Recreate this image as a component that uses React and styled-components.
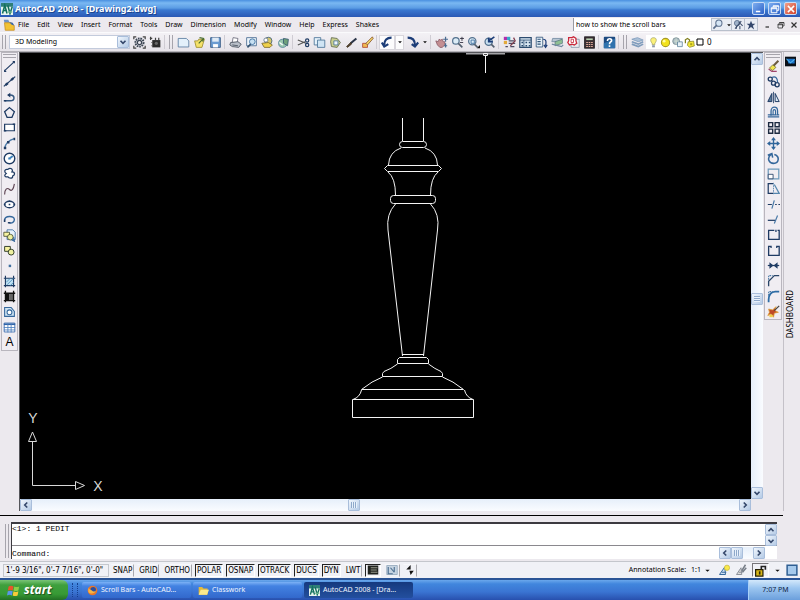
import React from 'react';
import styled, { createGlobalStyle, css } from 'styled-components';

/* ---------- icons, all on a 16 x 16 grid ---------- */

const NAVY = '#1f3b63';
const BLUE = '#4a7aa8';

const ICONS = {
  app: (
    <>
      <rect x="0" y="0" width="16" height="16" fill="#e8f4ee" />
      <path d="M0 0h16v5H0z" fill="#2f7f78" />
      <path d="M2 14L5 3l3 11M3 10h5M9 3l3 11 3-9" stroke="#12705e" strokeWidth="2" />
      <path d="M9 12h6" stroke="#6fb48f" strokeWidth="2" />
    </>
  ),
  drawing: (
    <>
      <path d="M1 1h6l2 4H2z" fill="#6d93c8" />
      <path d="M2 5h9l4 4v6H3z" fill="#f2c233" stroke="#c48a1c" />
      <path d="M8 4l5 1 2 4-4-2z" fill="#3f6aa8" />
    </>
  ),
  gear: (
    <>
      <path d="M1 4V1h3M12 1h3v3M15 12v3h-3M4 15H1v-3" stroke="#444" strokeWidth="1.500" />
      <circle cx="8" cy="8" r="5" stroke="#3c4654" strokeWidth="2.400" strokeDasharray="2 1" />
      <circle cx="8" cy="8" r="2.600" stroke="#3c4654" strokeWidth="1.500" />
    </>
  ),
  home: (
    <>
      <rect x="4" y="5" width="10" height="9" fill="#2b2b2b" />
      <path d="M1 3h3M2 1v4M3 8h1M3 12h1M8 2v3M12 2v3" stroke="#444" strokeWidth="1.500" />
      <circle cx="9" cy="9" r="2" fill="#666" />
    </>
  ),
  page: <path d="M1.500 3h10l3 3v7.500h-13z" fill="#e3f0fb" stroke="#55789c" />,
  open: (
    <>
      <path d="M2 6h4l1-2h7l-3 10H4z" fill="#f5e26a" stroke="#9a8a2c" />
      <path d="M8 2l5 1-1 4M13 3L7 9" stroke="#4c6f30" strokeWidth="1.500" />
    </>
  ),
  save: (
    <>
      <path d="M2 2h12v12H2z" fill="#6b9cd2" stroke="#31557f" />
      <path d="M4 2h8v5H4z" fill="#dfeaf5" />
      <path d="M5 10h6v4H5z" fill="#fff" />
    </>
  ),
  print: (
    <>
      <path d="M5 2l6 1-1 5H4z" fill="#fff" stroke="#667" />
      <path d="M2 8l9-1 4 3-3 4-8-1-3-2z" fill="#b8bec8" stroke="#454d5a" />
      <path d="M4 11l7 1" stroke="#454d5a" />
    </>
  ),
  preview: (
    <>
      <path d="M2 2h12v10H2z" fill="#eef5fb" stroke="#44678f" />
      <circle cx="9" cy="7" r="3.500" fill="#c7e0f2" stroke="#33679b" />
      <path d="M7 10l-4 4" stroke="#33506f" strokeWidth="2" />
    </>
  ),
  publish: (
    <>
      <circle cx="9" cy="6" r="4.500" fill="#d7c86a" stroke="#3a5c7c" />
      <path d="M1 9l8-1 5 3-3 3H4z" fill="#efd14b" stroke="#77662c" />
      <circle cx="6" cy="5" r="2.500" fill="#fff" stroke="#66788d" />
    </>
  ),
  globe: (
    <>
      <circle cx="7" cy="9" r="5" fill="#9cc9b0" stroke="#4f7f96" />
      <path d="M8 3l6 1-1 8-5-3z" fill="#6fa07b" stroke="#33566f" />
      <path d="M3 8l4 3" stroke="#fff" strokeWidth="1.500" />
    </>
  ),
  cut: (
    <>
      <path d="M1 5l10 4M1 11l9-4" stroke="#555" strokeWidth="1.300" />
      <circle cx="12.500" cy="5.500" r="2" stroke={NAVY} strokeWidth="1.500" />
      <circle cx="12.500" cy="11" r="2" stroke={NAVY} strokeWidth="1.500" />
    </>
  ),
  copy: (
    <>
      <path d="M1.500 2h8v9h-8z" fill="#e6f2fb" stroke="#456f94" />
      <path d="M5.500 5h9v9h-9z" fill="#cfe4f4" stroke="#456f94" />
    </>
  ),
  paste: (
    <>
      <path d="M3 2l7 1 4 5-4 6-7-1-1-6z" fill="#c9cf8e" stroke="#5c6546" />
      <path d="M6 6h5v5H6z" fill="#eef6fc" stroke="#456f94" />
    </>
  ),
  brush: (
    <>
      <path d="M14 3L7 9" stroke="#2a3448" strokeWidth="2.500" />
      <path d="M7 8l1 2-5 4-1-1z" fill="#5a4630" stroke="#3a2d1e" />
    </>
  ),
  block: (
    <>
      <path d="M2 9h6v5H2z" fill="#f0bb52" stroke="#ad4430" />
      <path d="M14 1l1 2-7 8-2-2z" fill="#f3d96a" stroke="#85512d" />
    </>
  ),
  undo: <path d="M13 2C7 2 4 5 4 11M1 8l3 5 5-3" stroke="#1c3d78" strokeWidth="2.600" />,
  redo: <path d="M2 2c6 0 9 3 9 9M7 10l4 3 4-5" stroke="#1c3d78" strokeWidth="2.600" />,
  down: <path d="M3 6h10l-5 5z" fill="#111" />,
  hand: (
    <>
      <path d="M1 6l3 1 1-3 2 1 2-1 1 3 2 0v4l-3 3H6L3 11z" fill="#c48e92" stroke="#8b5b67" />
      <path d="M13 1v6M10 4h6M13 9v5M11 12h4" stroke="#4a6b90" strokeWidth="1.500" />
    </>
  ),
  zoomRt: (
    <>
      <circle cx="6" cy="6" r="4" fill="#dcecf6" stroke="#54728f" strokeWidth="1.500" />
      <path d="M9 9l5 5" stroke="#54606f" strokeWidth="2" />
      <path d="M11 3h5M13.500 1v5M11 8h4" stroke="#223" />
    </>
  ),
  zoomWin: (
    <>
      <circle cx="6.500" cy="6.500" r="4.500" fill="#dcecf6" stroke="#54728f" strokeWidth="1.500" />
      <path d="M5 5h4v4H5z" stroke="#34679b" />
      <path d="M9 10l4 4" stroke="#54606f" strokeWidth="2" />
      <path d="M12 15h4v-4z" fill="#111" />
    </>
  ),
  zoomPrev: (
    <>
      <circle cx="7" cy="7" r="4.500" fill="#c8dff0" stroke="#54728f" strokeWidth="1.500" />
      <path d="M14 1L7 6M7 2v5h5" stroke="#1c3d78" strokeWidth="2" />
      <path d="M10 10l4 4" stroke="#54606f" strokeWidth="2" />
    </>
  ),
  props: (
    <>
      <path d="M1 1h4v4H1z" fill="#b02fae" />
      <path d="M5 1h4v4H5z" fill="#35a7c9" />
      <path d="M1 6h4v4H1z" fill="#e2a93b" />
      <path d="M7 6h7M7 9h8M3 13h3M9 13h5" stroke="#4d4b63" strokeWidth="1.500" />
      <path d="M13 2l2 4-6 6" stroke="#7c3b4c" strokeWidth="1.500" />
    </>
  ),
  center: (
    <>
      <rect x="1" y="2" width="14" height="12" fill="#dbe9f4" stroke="#2a4a6e" strokeWidth="1.500" />
      <path d="M1 5h14M6 5v9" stroke="#2a4a6e" />
      <path d="M8 7h2v2H8zM12 7h2v2h-2zM8 11h2v2H8zM12 11h2v2h-2zM3 7h2v2H3zM3 11h2v2H3z" fill="#2a4a6e" />
    </>
  ),
  palette: (
    <>
      <path d="M1.500 1.500h8v12h-8z" fill="#e6f0f8" stroke="#2f5277" />
      <path d="M3 4h4M3 7h4M3 10h4" stroke="#2f5277" strokeWidth="1.500" />
      <path d="M10 4c4 0 4 3 3 8M11 11l2 3 2-3" stroke="#1c3d78" strokeWidth="1.500" />
    </>
  ),
  sheets: (
    <>
      <path d="M2 3h12l-4 4H1z" fill="#b7c5d2" stroke="#7089a0" />
      <path d="M5 7l9-3v5l-9 3z" fill="#8fc093" stroke="#5e7d83" />
      <path d="M1 10l12 3 2-2" stroke="#7089a0" strokeWidth="1.500" />
    </>
  ),
  markup: (
    <>
      <path d="M5 4h10v10H5z" fill="#e8edf2" stroke="#8a98a8" />
      <path d="M2 2h4l2-1 3 2v3l1 3-3 2-3-1-3 1-2-3 1-2z" fill="#fff" stroke="#c9283b" strokeWidth="1.600" />
      <path d="M5 4h3v4H5z" stroke="#c9283b" />
    </>
  ),
  calc: (
    <>
      <rect x="2" y="1" width="12" height="14" fill="#3b3034" stroke="#1e1a1e" />
      <path d="M4 3h8v2H4z" fill="#b8d0b0" />
      <path d="M4 8h8M4 10.500h8M4 13h8" stroke="#e8b0a0" strokeWidth="1.300" strokeDasharray="2 1" />
    </>
  ),
  help: (
    <>
      <rect x="1" y="1" width="14" height="14" rx="1" fill="#1d4a80" />
      <path d="M1 9l14-6v12H1z" fill="#2f72ad" />
      <path d="M5.500 6c0-4 6-3 5 0-.5 1.500-2.500 1.500-2.500 4M8 11.500v2" stroke="#fff" strokeWidth="2" />
    </>
  ),
  layers: (
    <>
      <path d="M1 4l7-2 7 3-6 2z" fill="#a9bfd6" stroke="#7f9cbc" />
      <path d="M1 7l8 3 6-3M1 10l8 3 6-3" stroke="#7f9cbc" strokeWidth="2" />
    </>
  ),
  bulb: (
    <>
      <path d="M8 1c5 0 5 5 2 8v2H6V9C3 6 3 1 8 1z" fill="#fbf17a" stroke="#9b9b60" />
      <path d="M6 12h4v3H6z" fill="#8d98aa" />
    </>
  ),
  sun: (
    <>
      <circle cx="8" cy="8" r="6" fill="#f2e21d" stroke="#a89a27" strokeWidth="1.500" />
      <circle cx="6" cy="6" r="2" fill="#fffba5" />
    </>
  ),
  freeze: (
    <>
      <circle cx="6" cy="6" r="5" fill="#aebfc5" stroke="#6b8087" />
      <path d="M8 7h7v7H8z" fill="#e8f2f8" stroke="#4b7390" />
      <path d="M6 2v9M3 6h7" stroke="#d9e6d6" />
    </>
  ),
  lockOpen: (
    <>
      <path d="M2 9V4l3-2 3 2v3" stroke="#7f7e1d" strokeWidth="1.800" />
      <path d="M6 7l8-1 1 7-7 2-3-3z" fill="#f4e838" stroke="#7f7e1d" />
      <path d="M9 9h3v3H9z" fill="#a9a31e" />
    </>
  ),
  square: <path d="M2 2h12v12H2z" fill="#fff" stroke="#000" strokeWidth="2" />,
  magnifier: (
    <>
      <circle cx="10" cy="6" r="4.500" fill="#d6e6f5" stroke="#5b6f8c" strokeWidth="1.500" />
      <path d="M7 9l-5 5" stroke="#5b6f8c" strokeWidth="2.500" />
    </>
  ),
  comm: (
    <>
      <circle cx="6" cy="6" r="4" fill="#9fb2c9" stroke="#475c7b" />
      <path d="M3 14l9-11M8 4l6 6M10 10v5M5 10v4" stroke="#3a4c6a" strokeWidth="1.500" />
    </>
  ),
  star: <path d="M8 1l2 5h5l-4 3 2 6-5-4-5 4 2-6-4-3h5z" fill="#34486c" />,

  line: <path d="M2 13L13 3M2 12v2h2M12 2h2v2" stroke={NAVY} strokeWidth="1.400" />,
  xline: (
    <>
      <path d="M1 14L15 2" stroke={NAVY} strokeWidth="1.600" />
      <path d="M3 12.500l3-2.600M10 6.300l3-2.600" stroke={NAVY} strokeWidth="2.800" />
    </>
  ),
  pline: (
    <>
      <path d="M2 12h7c6 0 6-7 0-7H7" stroke="#34577f" strokeWidth="1.800" />
      <path d="M1 11h3v2H1zM9 2v6L5 5z" fill={NAVY} />
    </>
  ),
  polygon: <path d="M8 2l6 5-3 7H5L2 7z" stroke={NAVY} strokeWidth="1.600" />,
  rectangle: (
    <>
      <path d="M2 4h12v8H2z" fill="#fff" stroke={NAVY} strokeWidth="1.500" />
      <path d="M1 11h3v2H1zM12 3h3v2h-3z" fill={NAVY} />
    </>
  ),
  arc: (
    <>
      <path d="M2 14C3 8 7 4 14 2" stroke={BLUE} strokeWidth="1.600" />
      <path d="M1 12h3v3H1zM5 5h3v3H5zM13 1h2v3h-2z" fill={NAVY} />
    </>
  ),
  circle: (
    <>
      <circle cx="8" cy="8" r="6.500" fill="#fff" stroke={NAVY} strokeWidth="1.700" />
      <path d="M8 8l4-3M6.500 8h3" stroke="#3e83bd" strokeWidth="2.400" />
    </>
  ),
  cloud: (
    <path
      d="M4 8c-3-2-2-6 2-5 3-3 7 0 5 3 4 0 4 4 1 5 0 4-5 3-6 1-4 1-5-2-2-4z"
      fill="#fff"
      stroke={NAVY}
      strokeWidth="1.500"
    />
  ),
  spline: <path d="M2 14c0-6 3-9 6-6s5-1 6-7" stroke="#5d4452" strokeWidth="1.400" />,
  ellipse: (
    <>
      <ellipse cx="8" cy="8" rx="6" ry="4" fill="#fff" stroke={NAVY} strokeWidth="1.700" />
      <path d="M1 7h2v2H1zM13 7h2v2h-2zM7 3h2v2H7zM7 7h2v2H7z" fill={NAVY} />
    </>
  ),
  ellipseArc: (
    <>
      <path d="M2 9c0-6 12-6 12-1 0 3-3 5-6 4" stroke="#34679b" strokeWidth="1.700" />
      <path d="M1 8h2v3H1zM6 11h3v2H6z" fill={NAVY} />
    </>
  ),
  insert: (
    <>
      <path d="M5 1h7l3 3v9H5z" fill="#e6f2fb" stroke="#35679b" />
      <path d="M1 4h7v5H1z" fill="#f7f3a0" stroke="#454b2c" />
      <circle cx="9" cy="10" r="3.500" fill="#eef1a0" stroke="#454b2c" />
      <path d="M10 13l4 2-1-5" stroke="#35679b" strokeWidth="1.500" />
    </>
  ),
  makeBlock: (
    <>
      <path d="M2 3h7v6H2z" fill="#f7f3a0" stroke="#33402c" strokeWidth="1.200" />
      <circle cx="10" cy="10" r="3.600" fill="#eef1a0" stroke="#33402c" strokeWidth="1.200" />
    </>
  ),
  point: <path d="M7 7h3v3H7z" fill="#3f6f9f" />,
  hatch: (
    <>
      <path d="M3 4h10v9H3z" fill="#bfe0f2" />
      <path d="M1 4h14M1 13h14M3 1v14M13 1v14" stroke={NAVY} strokeWidth="1.400" />
      <path d="M4 9l5-5M5 12l8-8M9 13l4-4" stroke="#4689b8" />
    </>
  ),
  gradient: (
    <>
      <path d="M3 4h5v9H3z" fill="#111" />
      <path d="M8 4h5v9H8z" fill="#666" />
      <path d="M1 4h14M1 13h14M3 1v14M13 1v14" stroke="#111" strokeWidth="1.600" />
    </>
  ),
  region: (
    <>
      <path d="M2 3h8l4 5v6H2z" fill="#cfe4f4" stroke="#35679b" strokeWidth="1.300" />
      <circle cx="8" cy="9" r="3" fill="#fff" stroke="#35679b" strokeWidth="1.300" />
    </>
  ),
  table: (
    <>
      <path d="M1.500 2.500h13v11h-13z" fill="#fff" stroke="#2f63a8" />
      <path d="M1 3h14v2H1z" fill="#2f63a8" />
      <path d="M1 8h14M1 11h14M6 3v11M10 3v11" stroke="#4a7cbc" />
    </>
  ),

  erase: (
    <>
      <path d="M14 1L8 7" stroke="#6a5a3e" strokeWidth="2.500" />
      <path d="M3 10l4-4 4 3-4 4z" fill="#efe34e" stroke="#77722a" />
      <path d="M2 11l4 3h6" stroke="#a1446b" strokeWidth="1.500" />
    </>
  ),
  copyObj: (
    <>
      <circle cx="4" cy="5" r="2.500" stroke={NAVY} strokeWidth="1.600" />
      <circle cx="8" cy="10" r="2.500" stroke={NAVY} strokeWidth="1.600" />
      <circle cx="12.500" cy="12" r="2.500" stroke={NAVY} strokeWidth="1.600" />
      <path d="M6 3c4-2 7 0 7 6" stroke="#34679b" strokeWidth="1.500" />
    </>
  ),
  mirror: (
    <>
      <path d="M6 3v10H1z" fill="#5c7c9c" stroke={NAVY} strokeWidth="1.200" />
      <path d="M10 3v10h5z" fill="#dbe9f4" stroke={NAVY} strokeWidth="1.200" />
      <path d="M8 1v14" stroke={NAVY} />
    </>
  ),
  offset: (
    <>
      <path d="M1 13.500h14M1 11h4V6c0-6 8-6 8 0v5h2" stroke="#34679b" strokeWidth="1.600" />
      <path d="M4 11h8M7.500 11V6c0-2 3-2 3 0v5" stroke="#34679b" strokeWidth="1.400" />
    </>
  ),
  array: <path d="M2 2h5v5H2zM10 2h5v5h-5zM2 10h5v5H2zM10 10h5v5h-5z" stroke="#1c2a40" strokeWidth="1.700" />,
  move: (
    <>
      <path d="M8 2v12M2 8h12" stroke="#2f659a" strokeWidth="1.700" />
      <path d="M8 0l3 4H5zM8 16l3-4H5zM0 8l4-3v6zM16 8l-4-3v6z" fill="#2f659a" />
    </>
  ),
  rotate: <path d="M5 3C-1 8 3 14 8 14c7 0 8-9 1-11M1 4l5-2 1 5" stroke="#34679b" strokeWidth="1.900" />,
  scale: (
    <>
      <path d="M1.500 2.500h13v12h-13z" stroke="#6d9abb" strokeWidth="1.500" />
      <path d="M1.500 9h6v5.500h-6z" fill="#fff" stroke={NAVY} />
    </>
  ),
  stretch: (
    <>
      <path d="M7.500 2h-6v12h6" stroke={NAVY} strokeWidth="1.500" />
      <path d="M8 1v14" stroke={BLUE} strokeDasharray="2 1" />
      <path d="M9 3l6 11H8" stroke="#5687ae" strokeWidth="1.500" />
    </>
  ),
  trim: (
    <>
      <path d="M1 8h5M10 8h2M14 8h2" stroke={NAVY} strokeWidth="1.500" />
      <path d="M9 3L6 13" stroke={BLUE} strokeWidth="1.500" />
    </>
  ),
  extend: (
    <>
      <path d="M1 9h9" stroke={NAVY} strokeWidth="1.500" />
      <path d="M13 3l-4 10" stroke={BLUE} strokeWidth="1.500" />
    </>
  ),
  breakPt: <path d="M9 3H2v11h13V3h-2M11 2v3" stroke={NAVY} strokeWidth="1.600" />,
  breakObj: <path d="M5 3H2v11h13V3h-3M5 2v3M12 2v3" stroke={NAVY} strokeWidth="1.600" />,
  join: (
    <>
      <path d="M1 8h14" stroke={NAVY} strokeWidth="1.500" />
      <path d="M3 4l5 4-5 4zM13 4L8 8l5 4z" fill={NAVY} />
    </>
  ),
  chamfer: (
    <>
      <path d="M2 15V9l7-7h6" stroke="#2a4668" strokeWidth="1.600" />
      <path d="M2 7V2h5" stroke={BLUE} strokeWidth="1.300" strokeDasharray="2 1" />
    </>
  ),
  fillet: (
    <>
      <path d="M2 15v-3c0-6 3-10 8-10h5" stroke="#2d6ca5" strokeWidth="2.200" />
      <path d="M2 7V2h5" stroke={BLUE} strokeWidth="1.300" strokeDasharray="2 1" />
    </>
  ),
  explode: (
    <>
      <path d="M2 5l5 1 4-4-1 5 4 2-5 1-1 5-3-4-4 2 2-4z" fill="#bf4a28" stroke="#e0a13a" />
      <path d="M9 7l6-6" stroke="#444" strokeWidth="1.500" />
      <path d="M3 12h4v3H3z" fill="#efd14b" />
    </>
  ),
  dash: (
    <>
      <rect x="0" y="1" width="16" height="14" fill="#0b0f16" />
      <path d="M3 4h11v7H5z" fill="#1c73c8" />
      <path d="M2 4l6 6 6-5" stroke="#54b4ee" strokeWidth="1.500" />
    </>
  ),
  chevUp: <path d="M4 10l4-4 4 4" stroke="#34476a" strokeWidth="2.600" />,
  chevDown: <path d="M4 6l4 4 4-4" stroke="#34476a" strokeWidth="2.600" />,
  chevLeft: <path d="M10 4L6 8l4 4" stroke="#34476a" strokeWidth="2.600" />,
  chevRight: <path d="M6 4l4 4-4 4" stroke="#34476a" strokeWidth="2.600" />,
  minimize: <path d="M3 12h7" stroke="currentColor" strokeWidth="2.500" />,
  restore: <path d="M5 5V3h9v7h-3M2 6h9v8H2zM2 7.500h9M5 3.500h9" stroke="currentColor" strokeWidth="1.600" />,
  close: <path d="M3 3l10 10M13 3L3 13" stroke="currentColor" strokeWidth="2.400" />,
  model: (
    <>
      <rect x="1" y="2" width="14" height="12" fill="#20231f" />
      <path d="M5 5h9M5 8h8M5 11h9" stroke="#96998c" strokeWidth="1.500" />
    </>
  ),
  layout: (
    <>
      <path d="M1 2h14v12H1z" fill="#c6d4e1" stroke="#8da3b8" />
      <path d="M3 4v9h6M6 5l5 6M11 4v7" stroke="#4d6f91" strokeWidth="1.500" />
    </>
  ),
  updown: <path d="M9 0v7H2zM7 9h7l-5 7z" fill="#111" />,
  annoVis: (
    <>
      <path d="M2 14L9 4l1 10zM5 11h6" fill="#cfe0f4" stroke="#34679b" strokeWidth="1.300" />
      <circle cx="12" cy="5" r="3.500" fill="#f9e94b" stroke="#c9b93c" />
    </>
  ),
  annoAuto: (
    <>
      <path d="M2 14L8 5l1 9zM5 11h5" fill="#ddd" stroke="#8a8f98" strokeWidth="1.300" />
      <path d="M14 1L9 9M15 5l-5 6" stroke="#777e88" strokeWidth="2" />
    </>
  ),
  padlock: (
    <>
      <path d="M9 7V3h5v4" stroke="#222" strokeWidth="2" />
      <path d="M2 7h9v8H2z" fill="#d8b718" stroke="#252005" strokeWidth="1.500" />
      <path d="M6 9h2v4H6z" fill="#302804" />
    </>
  ),
  clean: <path d="M1.500 1.500h13v13h-13z" fill="#a6caec" stroke="#2f5f92" strokeWidth="2" />,
  windows: (
    <>
      <path d="M2 3c2-1 4-1 6 0L7 8C5 7 3 7 1 8z" fill="#e8552b" />
      <path d="M9 3c2 1 4 1 6 0l-1 5c-2 1-4 1-6 0z" fill="#8ccf46" />
      <path d="M1 9c2-1 4-1 6 0l-1 5c-2-1-4-1-6 0z" fill="#5a95ec" />
      <path d="M8 9c2 1 4 1 6 0l-1 5c-2 1-4 1-6 0z" fill="#f8cb39" />
    </>
  ),
  firefox: (
    <>
      <circle cx="8" cy="8" r="7" fill="#e8762a" />
      <circle cx="9" cy="7" r="4" fill="#2a4fa0" />
      <path d="M2 3c0 4 3 3 5 5s4 2 6 0c-1 5-8 6-11 2z" fill="#f7b545" />
    </>
  ),
  folder: (
    <>
      <path d="M1 3h5l2 2h6v9H1z" fill="#e2b93c" />
      <path d="M4 7h12l-3 7H1z" fill="#fbe98c" />
    </>
  ),
};

const Icon = ({ name, size = 13 }) => (
  <Glyph viewBox="0 0 16 16" width={size} height={size} fill="none" aria-hidden="true">
    {ICONS[name]}
  </Glyph>
);

/* ---------- data ---------- */

const MENUS = ['File', 'Edit', 'View', 'Insert', 'Format', 'Tools', 'Draw', 'Dimension', 'Modify', 'Window', 'Help', 'Express', 'Shakes'];

const STANDARD = [
  ['page', 'open', 'save'],
  ['print', 'preview', 'publish', 'globe'],
  ['cut', 'copy', 'paste', 'brush', 'block'],
];

const VIEW_TOOLS = [
  ['hand', 'zoomRt', 'zoomWin', 'zoomPrev'],
  ['props', 'center', 'palette', 'sheets', 'markup', 'calc'],
  ['help'],
];

const DRAW_TOOLS = ['line', 'xline', 'pline', 'polygon', 'rectangle', 'arc', 'circle', 'cloud', 'spline', 'ellipse', 'ellipseArc', 'insert', 'makeBlock', 'point', 'hatch', 'gradient', 'region', 'table', 'text'];

const MODIFY_TOOLS = ['erase', 'copyObj', 'mirror', 'offset', 'array', 'move', 'rotate', 'scale', 'stretch', 'trim', 'extend', 'breakPt', 'breakObj', 'join', 'chamfer', 'fillet', 'explode'];

const MODES = [
  { label: 'SNAP', on: false },
  { label: 'GRID', on: false },
  { label: 'ORTHO', on: false },
  { label: 'POLAR', on: true },
  { label: 'OSNAP', on: true },
  { label: 'OTRACK', on: true },
  { label: 'DUCS', on: true },
  { label: 'DYN', on: true },
  { label: 'LWT', on: false },
];

const TASKS = [
  { icon: 'firefox', label: 'Scroll Bars - AutoCAD...' },
  { icon: 'folder', label: 'Classwork' },
  { icon: 'app', label: 'AutoCAD 2008 - [Dra...', active: true },
];

/* ---------- parts ---------- */

const ToolGroups = ({ groups }) =>
  groups.map((group) => (
    <React.Fragment key={group[0]}>
      {group.map((name) => (
        <ToolButton key={name} type="button" aria-label={name}>
          <Icon name={name} />
        </ToolButton>
      ))}
      <Separator />
    </React.Fragment>
  ));

const SideTools = ({ tools, side }) => (
  <ToolColumn $side={side}>
    <ColumnGrip />
    <ToolStack $count={tools.length}>
      {tools.map((name) => (
        <StackButton key={name} type="button" aria-label={name}>
          {name === 'text' ? 'A' : <Icon name={name} />}
        </StackButton>
      ))}
    </ToolStack>
  </ToolColumn>
);

const ScrollBar = ({ vertical, before, after }) => (
  <Track $vertical={vertical}>
    <ScrollButton type="button" aria-label="Scroll back">
      <Icon name={vertical ? 'chevUp' : 'chevLeft'} size={10} />
    </ScrollButton>
    <Space $grow={before} />
    <ScrollThumb $vertical={vertical} />
    <Space $grow={after} />
    <ScrollButton type="button" aria-label="Scroll forward">
      <Icon name={vertical ? 'chevDown' : 'chevRight'} size={10} />
    </ScrollButton>
  </Track>
);

const Drawing = () => (
  <DrawingSvg viewBox="20 53 731 446" preserveAspectRatio="xMidYMid meet" fill="none" stroke="#f4f4f4">
    {/* cursor at the top edge */}
    <path d="M466 53.500h39" stroke="#a4a4a8" strokeWidth="2" />
    <path d="M485.500 56v17M483.500 53.500h4v2h-4z" />

    {/* table leg */}
    <path d="M402.500 118v23M423.500 118v23" />
    <rect x="399.500" y="141.500" width="27" height="6" rx="3" />
    <path d="M401 148Q389 152 388.500 165M425 148Q437 152 437.500 165" />
    <path d="M387.500 165.500h51l3 3-3 3h-51l-3-3z" />
    <path d="M388 172Q395.500 178 395.500 195M438 172Q430.500 178 430.500 195" />
    <rect x="390.500" y="195.500" width="45" height="8" rx="3" />
    <path d="M395.500 204Q386 214 388 230L402.500 356M430.500 204Q440 214 437.500 230L423.500 356" />
    <path d="M402 354.500h22M399.500 357.500h27l2 2v4h-31v-4zM397.500 364Q391 369 384 371.500l-1.500 2v3h60v-3l-1.500-2Q435 369 428.500 364" />
    <path d="M382.500 377Q372 381 361.500 389.500h102Q453 381 442.500 377" />
    <path d="M361.500 390Q360 397 353 399.500M464.500 390Q466 397 473 399.500" />
    <path d="M352.500 399.500h121v18h-121z" />

    {/* UCS icon */}
    <path d="M32.500 441V485.500H75M28.500 441.500l4-9.500 4 9.500zM75.500 481.500v8l9-4z" stroke="#d8d8d8" />
    <AxisLabel x="33" y="423">Y</AxisLabel>
    <AxisLabel x="98" y="491">X</AxisLabel>
  </DrawingSvg>
);

export default function App() {
  return (
    <Window>
      <GlobalStyle />

      <TitleBar>
        <Icon name="app" size={12} />
        <Title>AutoCAD 2008 - [Drawing2.dwg]</Title>
        <CaptionButton type="button" aria-label="Minimize"><Icon name="minimize" size={10} /></CaptionButton>
        <CaptionButton type="button" aria-label="Restore"><Icon name="restore" size={10} /></CaptionButton>
        <CaptionButton type="button" aria-label="Close" $danger><Icon name="close" size={10} /></CaptionButton>
      </TitleBar>

      <MenuBar>
        <Icon name="drawing" size={12} />
        <MenuList>
          {MENUS.map((label) => <MenuItem key={label} type="button">{label}</MenuItem>)}
        </MenuList>
        <SearchInput aria-label="Search help" defaultValue="how to show the scroll bars" />
        <InfoButton type="button" aria-label="Search" $wide>
          <Icon name="magnifier" size={11} />
          <Icon name="down" size={6} />
        </InfoButton>
        <InfoButton type="button" aria-label="Communication center"><Icon name="comm" size={11} /></InfoButton>
        <InfoButton type="button" aria-label="Favorites"><Icon name="star" size={10} /></InfoButton>
        <DocButtons>
          <PlainButton type="button" aria-label="Minimize drawing"><Icon name="minimize" size={8} /></PlainButton>
          <PlainButton type="button" aria-label="Restore drawing"><Icon name="restore" size={8} /></PlainButton>
          <PlainButton type="button" aria-label="Close drawing"><Icon name="close" size={8} /></PlainButton>
        </DocButtons>
      </MenuBar>

      <ToolBar>
        <Grip />
        <WorkspaceBox>
          <WorkspaceSelect aria-label="Workspace" defaultValue="3D Modeling">
            <option>3D Modeling</option>
          </WorkspaceSelect>
          <SelectArrow><Icon name="chevDown" size={10} /></SelectArrow>
        </WorkspaceBox>
        <ToolButton type="button" aria-label="Workspace settings"><Icon name="gear" /></ToolButton>
        <ToolButton type="button" aria-label="My workspace"><Icon name="home" /></ToolButton>
        <Separator />
        <Grip />
        <ToolGroups groups={STANDARD} />
        <ToolButton type="button" aria-label="Undo" $raised><Icon name="undo" /></ToolButton>
        <ArrowButton type="button" aria-label="Undo list" $raised><Icon name="down" size={6} /></ArrowButton>
        <ToolButton type="button" aria-label="Redo"><Icon name="redo" /></ToolButton>
        <ArrowButton type="button" aria-label="Redo list"><Icon name="down" size={6} /></ArrowButton>
        <Separator />
        <ToolGroups groups={VIEW_TOOLS} />
        <Grip />
        <ToolButton type="button" aria-label="Layers"><Icon name="layers" /></ToolButton>
        <LayerBox>
          <Icon name="bulb" size={11} />
          <Icon name="sun" size={11} />
          <Icon name="freeze" size={11} />
          <Icon name="lockOpen" size={11} />
          <Icon name="square" size={8} />
          <LayerName>0</LayerName>
        </LayerBox>
      </ToolBar>

      <Workspace>
        <SideTools tools={DRAW_TOOLS} side="left" />
        <ViewArea>
          <Canvas><Drawing /></Canvas>
          <ScrollBar vertical before={555} after={445} />
          <ScrollBar before={455} after={545} />
        </ViewArea>
        <SideTools tools={MODIFY_TOOLS} side="right" />
        <Dashboard>
          <Icon name="dash" size={11} />
          <DashboardLabel>DASHBOARD</DashboardLabel>
        </Dashboard>
      </Workspace>

      <CommandPanel>
        <Grip />
        <CommandWindow>
          <History>
            <HistoryText>&lt;1&gt;: 1 PEDIT</HistoryText>
            <HistoryScroll>
              <ScrollButton type="button" aria-label="Scroll up"><Icon name="chevUp" size={10} /></ScrollButton>
              <ScrollButton type="button" aria-label="Scroll down"><Icon name="chevDown" size={10} /></ScrollButton>
            </HistoryScroll>
          </History>
          <PromptRow>
            <PromptLabel htmlFor="command">Command:</PromptLabel>
            <PromptInput id="command" />
            <PromptScroll><ScrollBar before={0} after={1} /></PromptScroll>
          </PromptRow>
        </CommandWindow>
      </CommandPanel>

      <StatusBar>
        <Coordinates>1'-9 3/16", 0'-7 7/16", 0'-0"</Coordinates>
        <ModeList>
          {MODES.map(({ label, on }) => (
            <ModeButton key={label} type="button" aria-pressed={on} $on={on}>{label}</ModeButton>
          ))}
          <ModeButton type="button" aria-label="Model" $on><Icon name="model" size={12} /></ModeButton>
          <ModeButton type="button" aria-label="Layout"><Icon name="layout" size={12} /></ModeButton>
          <ModeButton type="button" aria-label="More layouts"><Icon name="updown" size={10} /></ModeButton>
        </ModeList>
        <StatusTray>
          <span>Annotation Scale:</span>
          <ScaleButton type="button">1:1 <Icon name="down" size={7} /></ScaleButton>
          <PlainButton type="button" aria-label="Annotation visibility"><Icon name="annoVis" size={12} /></PlainButton>
          <PlainButton type="button" aria-label="Automatic scales"><Icon name="annoAuto" size={12} /></PlainButton>
          <LockButton type="button" aria-label="Lock toolbars"><Icon name="padlock" /></LockButton>
          <PlainButton type="button" aria-label="Status bar menu"><Icon name="down" size={7} /></PlainButton>
          <PlainButton type="button" aria-label="Clean screen"><Icon name="clean" size={12} /></PlainButton>
        </StatusTray>
      </StatusBar>

      <TaskBar>
        <StartButton type="button"><Icon name="windows" size={13} />start</StartButton>
        <TaskGrip />
        <TaskList>
          {TASKS.map(({ icon, label, active }) => (
            <TaskButton key={label} type="button" $active={active}>
              <Icon name={icon} size={11} />
              {label}
            </TaskButton>
          ))}
        </TaskList>
        <Clock>7:07 PM</Clock>
      </TaskBar>
    </Window>
  );
}

/* ---------- styles ---------- */

const UI_FONT = '"Noto Sans", "Open Sans", sans-serif';
const CONDENSED = '"DejaVu Sans Condensed", "Noto Sans", sans-serif';
const ARIAL = '"Liberation Sans", Arial, sans-serif';

const GlobalStyle = createGlobalStyle`
  * {
    box-sizing: border-box;
  }
  body {
    margin: 0;
    background: #ece9ee;
    color: #000;
    font: 7px/10px ${UI_FONT};
  }
  button, input, select {
    margin: 0;
    padding: 0;
    border: 0;
    background: none;
    color: inherit;
    font: inherit;
  }
`;

const Glyph = styled.svg`
  display: block;
  flex: none;
`;

const Window = styled.div`
  display: flex;
  flex-direction: column;
  min-height: 100vh;
  overflow: hidden;
`;

const TitleBar = styled.header`
  display: flex;
  align-items: center;
  gap: 2px;
  height: 17px;
  padding: 0 3px 0 1px;
  color: #fff;
  background: linear-gradient(#4a90e0, #7ab8f2 3px, #5b9ce4 8px, #3a78d0 10px, #2a58b4);
`;

const Title = styled.h1`
  flex: 1;
  margin: 0;
  font: bold 9px/14px ${UI_FONT};
  text-shadow: 1px 1px 0 #1c4590;
`;

const CaptionButton = styled.button`
  display: grid;
  place-items: center;
  width: 13px;
  height: 13px;
  margin-left: 1px;
  border: 1px solid #c9dcf6;
  border-radius: 2px;
  background: ${({ $danger }) =>
    $danger ? 'linear-gradient(135deg, #f0a08a, #d2402a)' : 'linear-gradient(135deg, #7eaef0, #2c62c8)'};
`;

const MenuBar = styled.nav`
  display: flex;
  align-items: center;
  height: 15px;
  padding: 0 2px 0 3px;
  background: #ece9ee;
`;

const MenuList = styled.div`
  display: flex;
  flex: 1;
  gap: 8px;
  padding-left: 3px;
`;

const MenuItem = styled.button`
  white-space: nowrap;
`;

const SearchInput = styled.input`
  width: 138px;
  height: 13px;
  padding: 0 2px;
  border-left: 1px solid #9a9aa2;
  background: #fff;
`;

const InfoButton = styled.button`
  display: flex;
  align-items: center;
  justify-content: center;
  gap: 3px;
  width: ${({ $wide }) => ($wide ? 21 : 13)}px;
  height: 13px;
  border: 1px solid #b9c0cc;
  border-left-width: ${({ $wide }) => ($wide ? 1 : 0)}px;
  background: #e9edf4;
`;

const DocButtons = styled.div`
  display: flex;
  gap: 5px;
  padding-left: 6px;
  color: #333;
`;

const PlainButton = styled.button`
  display: flex;
  align-items: center;
`;

const ToolBar = styled.div`
  display: flex;
  align-items: center;
  height: 20px;
  border-top: 1px solid #fafafc;
  border-bottom: 1px solid #b4b2b8;
  background: linear-gradient(#f3f1f5, #e6e3e9);
`;

const Grip = styled.span`
  flex: none;
  width: 4px;
  height: 14px;
  margin: 0 2px;
  border: 1px solid #a6a4ac;
  border-width: 0 1px;
`;

const WorkspaceBox = styled.div`
  display: flex;
  width: 121px;
  height: 14px;
  margin: 0 1px;
  border: 1px solid #c3cbdc;
  background: #fff;
`;

const WorkspaceSelect = styled.select`
  flex: 1;
  padding-left: 5px;
  appearance: none;
`;

const arrowFace = css`
  border: 1px solid #a9bedb;
  border-radius: 1px;
  background: linear-gradient(135deg, #f0f6fd, #b5cbe6);
`;

const SelectArrow = styled.span`
  display: grid;
  place-items: center;
  width: 12px;
  pointer-events: none;
  ${arrowFace}
`;

const ToolButton = styled.button`
  display: grid;
  flex: none;
  place-items: center;
  width: 16px;
  height: 15px;
  ${({ $raised }) => $raised && 'background: #fcfcfd; border: 1px solid #d8d6dc;'}
`;

const ArrowButton = styled(ToolButton)`
  width: 9px;
`;

const Separator = styled.span`
  flex: none;
  width: 1px;
  height: 14px;
  margin: 0 2px 0 1px;
  background: #cfccd3;
`;

const LayerBox = styled.div`
  display: flex;
  flex: 1;
  align-items: center;
  height: 14px;
  padding-left: 2px;
  margin-left: 1px;
  gap: 1px;
  background: #fff;
`;

const LayerName = styled.span`
  padding-left: 2px;
  font-size: 8px;
`;

const Workspace = styled.main`
  display: flex;
  flex: 1;
  padding-bottom: 4px;
`;

const ToolColumn = styled.div`
  align-self: flex-start;
  width: ${({ $side }) => ($side === 'left' ? 17 : 18)}px;
  margin: 0 1px;
  border: 1px solid #b9b6be;
  background: #f0edf2;
`;

const ColumnGrip = styled.div`
  height: 4px;
  margin: 1px;
  border: 1px solid #a6a4ac;
  border-width: 1px 0;
`;

const ToolStack = styled.div`
  display: grid;
  grid-auto-rows: 1fr;
  height: ${({ $count }) => ($count > 17 ? 291 : 260)}px;
`;

const StackButton = styled.button`
  display: grid;
  place-items: center;
  font: 12px/12px ${ARIAL};
`;

const ViewArea = styled.div`
  display: grid;
  flex: 1;
  grid-template-columns: 1fr 12px;
  grid-template-rows: 1fr 12px;
  border-top: 1px solid #55555a;
  border-left: 1px solid #55555a;
`;

const Canvas = styled.section`
  position: relative;
  background: #000;
`;

const DrawingSvg = styled.svg`
  position: absolute;
  inset: 0;
  width: 100%;
  height: 100%;
`;

const AxisLabel = styled.text`
  fill: #d8d8d8;
  stroke: none;
  font: 14px ${ARIAL};
  text-anchor: middle;
`;

const Track = styled.div`
  display: flex;
  flex: 1;
  flex-direction: ${({ $vertical }) => ($vertical ? 'column' : 'row')};
  background: linear-gradient(${({ $vertical }) => ($vertical ? '90deg' : '180deg')}, #e6effa, #fafcff);
`;

const ScrollButton = styled.button`
  display: grid;
  flex: none;
  place-items: center;
  width: 12px;
  height: 12px;
  ${arrowFace}
`;

const Space = styled.span`
  flex: ${({ $grow }) => $grow} 0 0;
`;

const ScrollThumb = styled.span`
  flex: none;
  width: 12px;
  height: 12px;
  padding: 2px;
  ${arrowFace}

  &::after {
    content: '';
    display: block;
    height: 100%;
    background: repeating-linear-gradient(
      ${({ $vertical }) => ($vertical ? '180deg' : '90deg')},
      #8fa9ca 0 1px,
      #e8f1fb 1px 2px
    );
  }
`;

const Dashboard = styled.aside`
  display: flex;
  flex-direction: column;
  align-items: center;
  gap: 223px;
  width: 17px;
  padding: 4px 4px 0 0;
  border-left: 1px solid #c4c1c8;
`;

const DashboardLabel = styled.span`
  writing-mode: vertical-rl;
  transform: rotate(180deg);
  font-size: 8px;
`;

const CommandPanel = styled.section`
  display: flex;
  align-items: center;
  height: 46px;
  margin-right: 17px;
  padding: 6px 6px 2px 3px;
  border-top: 1px solid #000;

  & > ${Grip} {
    height: 34px;
  }
`;

const CommandWindow = styled.div`
  flex: 1;
  border-top: 2px solid #3c3a40;
  border-left: 1px solid #3c3a40;
  background: #fff;
  font: 8px/10px "Liberation Mono", monospace;
`;

const History = styled.div`
  display: flex;
  height: 22px;
  border-bottom: 1px solid #8a888e;
`;

const HistoryText = styled.output`
  flex: 1;
`;

const HistoryScroll = styled.div`
  display: flex;
  flex-direction: column;

  ${ScrollButton} {
    height: 11px;
  }
`;

const PromptRow = styled.div`
  display: flex;
  align-items: center;
  height: 13px;
  padding-right: 12px;
`;

const PromptLabel = styled.label`
  padding-top: 2px;
`;

const PromptInput = styled.input`
  flex: 1;
`;

const PromptScroll = styled.div`
  display: flex;
  width: 46px;
`;

const StatusBar = styled.footer`
  display: flex;
  align-items: center;
  height: 17px;
  padding: 0 2px 0 3px;
  border-top: 1px solid #c4c6cc;
  background: #f0f1f6;
`;

const Coordinates = styled.output`
  width: 106px;
  height: 13px;
  padding: 0 2px;
  border: 1px solid #c5c8ce;
  font: 8px/12px ${CONDENSED};
  white-space: nowrap;
`;

const ModeList = styled.div`
  display: flex;
  flex: 1;
  gap: 3px;
  padding-left: 2px;
`;

const ModeButton = styled.button`
  display: flex;
  align-items: center;
  height: 13px;
  padding: 0 1px;
  border: 1px solid;
  border-color: ${({ $on }) => ($on ? '#222 #fff #fff #222' : '#f8f8fb #a8a8ae #f0f1f6 #f0f1f6')};
  font: 8px/11px ${CONDENSED};
`;

const StatusTray = styled.div`
  display: flex;
  align-items: center;
  gap: 5px;
`;

const ScaleButton = styled.button`
  display: flex;
  align-items: center;
  gap: 3px;
  padding-right: 2px;
`;

const LockButton = styled(PlainButton)`
  justify-content: center;
  width: 17px;
  height: 14px;
  border: 1px solid;
  border-color: #77757a #fff #fff #77757a;
`;

const TaskBar = styled.footer`
  display: flex;
  align-items: center;
  height: 22px;
  border-top: 2px solid #2a5496;
  color: #fff;
  background: linear-gradient(#6ba8ec, #4186dd 4px, #3a74d2 12px, #2850ae);
`;

const StartButton = styled.button`
  display: flex;
  align-items: center;
  gap: 4px;
  width: 68px;
  height: 20px;
  padding-left: 7px;
  border-radius: 0 6px 6px 0;
  background: linear-gradient(#7ac476, #3f9f3d 5px, #379a35 14px, #226f24);
  font: italic bold 12px/14px "Open Sans", sans-serif;
  text-shadow: 1px 1px 1px #1c4d1c;
`;

const TaskGrip = styled.span`
  width: 6px;
  height: 14px;
  margin: 0 4px;
  border: 1px dotted #16408e;
  border-width: 0 1px;
`;

const TaskList = styled.div`
  display: flex;
  flex: 1;
  gap: 2px;
`;

const TaskButton = styled.button`
  display: flex;
  align-items: center;
  gap: 3px;
  width: 109px;
  height: 16px;
  padding: 0 5px;
  border-radius: 2px;
  color: #f2f6ff;
  white-space: nowrap;
  background: ${({ $active }) =>
    $active ? 'linear-gradient(#15397e, #234f9e)' : 'linear-gradient(#7db2f6, #4382e2 4px, #3268cc)'};
`;

const Clock = styled.time`
  display: grid;
  place-items: center;
  align-self: stretch;
  width: 52px;
  padding-left: 2px;
  border-left: 1px solid #a8d0f8;
  color: #0e2346;
  background: linear-gradient(#d3e8fb, #9cc6f0 8px, #6b9fdc);
`;
